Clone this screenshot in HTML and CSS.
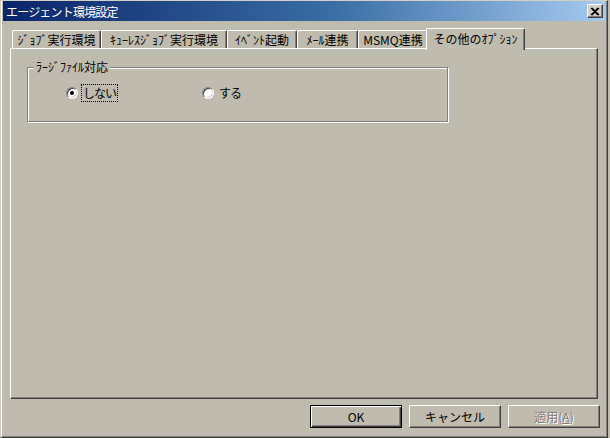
FILE: index.html
```html
<!DOCTYPE html>
<html lang="ja">
<head>
    <meta charset="UTF-8">
    <title>エージェント環境設定</title>
    <link rel="stylesheet" href="styles.css">
</head>
<body>
<div class="window">
    <div class="titlebar">
        <span class="title">エージェント環境設定</span>
        <span class="close-btn">
            <svg width="10" height="9" viewBox="0 0 10 9"><path d="M1 1 L8 8 M2 1 L9 8 M8 1 L1 8 M9 1 L2 8" stroke="#000" stroke-width="1.2" fill="none"/></svg>
        </span>
    </div>
    <div class="tabs">
        <div class="tab tab-1">ｼﾞｮﾌﾞ実行環境</div>
        <div class="tab tab-2">ｷｭｰﾚｽｼﾞｮﾌﾞ実行環境</div>
        <div class="tab tab-3">ｲﾍﾞﾝﾄ起動</div>
        <div class="tab tab-4">ﾒｰﾙ連携</div>
        <div class="tab tab-5">MSMQ連携</div>
        <div class="tab tab-6 active">その他のｵﾌﾟｼｮﾝ</div>
    </div>
    <div class="panel">
        <div class="group">
            <span class="legend">ﾗｰｼﾞﾌｧｲﾙ対応</span>
            <div class="radios">
                <label class="radio-item first">
                    <span class="radio checked"></span>
                    <span class="radio-label focus">しない</span>
                </label>
                <label class="radio-item">
                    <span class="radio"></span>
                    <span class="radio-label">する</span>
                </label>
            </div>
        </div>
    </div>
    <div class="buttons">
        <button class="btn default">OK</button>
        <button class="btn">キャンセル</button>
        <button class="btn disabled">適用(<u>A</u>)</button>
    </div>
</div>
</body>
</html>
```

FILE: styles.css
```css
body { margin: 0; background: #bfbbaf; font-family: "Noto Sans CJK JP", "DejaVu Sans", sans-serif; font-size: 12px; color: #000; }
.window { width: 608px; height: 438px; box-sizing: border-box; display: flex; flex-direction: column;
    background: #bfbbaf; border: 1px solid; border-color: #d4d0c8 #404040 #404040 #d4d0c8;
    padding: 0 2px 2px 2px; box-shadow: inset 1px 0 #fff, inset -1px -1px #808080;
}

/* Title bar */
.titlebar { height: 20px; display: flex; align-items: center; justify-content: space-between;
    background: linear-gradient(90deg, #0a246a 0%, #3a6ea5 55%, #a6caf0 100%); padding: 0 2px 0 3px; }
.title { color: #fff; font-size: 12px; letter-spacing: -0.8px; }
.close-btn { width: 16px; height: 14px; box-sizing: border-box; display: flex; align-items: center; justify-content: center;
    background: #d4d0c8; border: 1px solid; border-color: #fff #404040 #404040 #fff; box-shadow: inset -1px -1px #808080; }

/* Tabs */
.tabs { display: flex; align-items: flex-end; height: 20px; margin: 7px 0 0 9px; }
.tab { height: 18px; box-sizing: border-box; display: flex; align-items: center; justify-content: center;
    border: 1px solid; border-bottom: none; border-color: #fff #404040 #fff #fff; border-radius: 2px 2px 0 0;
    box-shadow: inset -1px 0 #808080; background: #bfbbaf; white-space: nowrap; }
.tab-1 { width: 89px; }
.tab-2 { width: 126px; }
.tab-3 { width: 70px; }
.tab-4 { width: 61px; }
.tab-5 { width: 70px; }
.tab-6 { width: 95px; }
.tab.active { height: 22px; width: 99px; margin: 0 -2px -2px; position: relative; z-index: 1; padding-bottom: 3px; }

.panel { height: 351px; margin: 0 7px 0 7px; box-sizing: border-box;
    border: 1px solid; border-color: #fff #404040 #404040 #fff; box-shadow: inset -1px -1px #808080; }

/* Group box */
.group { position: relative; width: 421px; height: 55px; box-sizing: border-box; margin: 18px 0 0 16px;
    border: 1px solid #808080; box-shadow: inset 1px 1px #fff, 1px 1px #fff; }
.legend { position: absolute; left: 6px; top: -9px; padding: 0 2px; background: #bfbbaf; line-height: 16px; }
.radios { display: flex; padding: 17px 0 0 38px; }
.radio-item { display: flex; align-items: center; }
.radio-item.first { width: 136px; }
.radio { width: 12px; height: 12px; box-sizing: border-box; border-radius: 50%; position: relative; background: #fff;
    border: 1px solid; border-color: #808080 #fff #fff #808080; box-shadow: inset 1px 1px #404040, inset -1px -1px #d4d0c8; }
.radio.checked::after { content: ""; position: absolute; left: 3px; top: 3px; width: 4px; height: 4px; border-radius: 50%; background: #000; }
.radio-label { margin-left: 4px; padding: 1px 1px; line-height: 14px; letter-spacing: -1px; }
.focus { outline: 1px dotted #000; }

/* Buttons */
.buttons { display: flex; justify-content: flex-end; gap: 7px; margin-top: 6px; padding-right: 5px; }
.btn { width: 92px; height: 23px; box-sizing: border-box; font: inherit; padding: 0; background: #bfbbaf; color: #000;
    border: 1px solid; border-color: #fff #404040 #404040 #fff; box-shadow: inset -1px -1px #808080; }
.btn.default { border-color: #000; box-shadow: inset 1px 1px #fff, inset -1px -1px #404040, inset -2px -2px #808080; }
.btn.disabled { color: #808080; text-shadow: 1px 1px #fff; }
```
